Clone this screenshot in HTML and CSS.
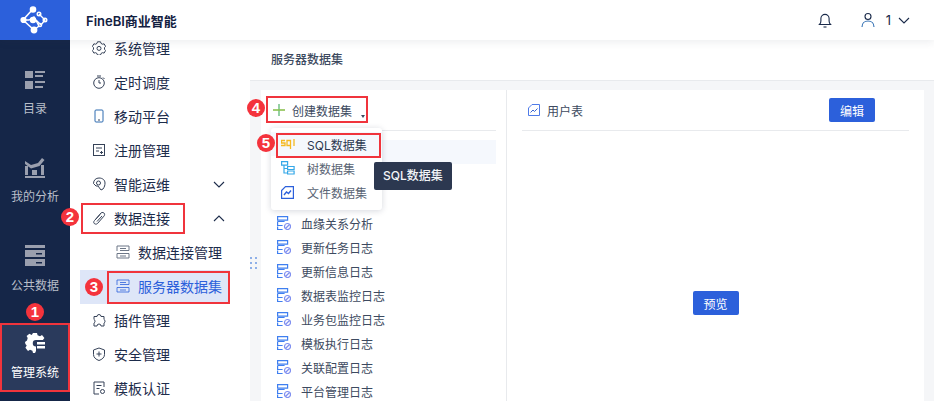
FILE: index.html
```html
<!DOCTYPE html>
<html lang="zh-CN">
<head>
<meta charset="utf-8">
<title>FineBI</title>
<link rel="stylesheet" href="styles.css">
</head>
<body>
<div class="app">
  <header class="topbar">
    <div class="logo">
      <svg width="30" height="30" viewBox="0 0 30 30" fill="none" stroke="#fff" stroke-width="1.4">
        <path d="M13 4 L3 15 L14 25" stroke-width="1.6"/>
        <path d="M3 15 L9 15 L14 12 L19 21 L14 25"/>
        <path d="M19 9 L25 15 L21 20 L16 15"/>
        <circle cx="13" cy="4.5" r="2.6" fill="#fff"/>
        <circle cx="3.5" cy="15" r="2.4" fill="#fff"/>
        <circle cx="14" cy="25" r="2.7" fill="#fff"/>
        <circle cx="13" cy="15" r="2.5" fill="#fff"/>
        <circle cx="19" cy="9" r="1.8"/>
        <circle cx="25" cy="15" r="1.8"/>
        <circle cx="20" cy="20" r="1.6"/>
      </svg>
    </div>
    <div class="brand">FineBI商业智能</div>
    <div class="top-actions">
      <svg class="bell" width="16" height="16" viewBox="0 0 16 16" fill="none" stroke="#1a2a4a" stroke-width="1.1">
        <path d="M2.5 12.5h11c-1-1-1.4-2-1.4-3.5V6.5a4.1 4.1 0 0 0-8.2 0V9c0 1.5-.4 2.5-1.4 3.5z"/>
        <path d="M6.5 15h3"/>
      </svg>
      <svg class="user" width="14" height="16" viewBox="0 0 14 16" fill="none" stroke="#1a2a4a" stroke-width="1.1">
        <circle cx="7" cy="4.5" r="3"/>
        <path d="M1 15c0-3.500 2.500-6 6-6s6 2.500 6 6" stroke="#2c6bb0"/>
      </svg>
      <span class="user-num">1</span>
      <svg width="12" height="7" viewBox="0 0 12 7" fill="none" stroke="#1a2a4a" stroke-width="1.1"><path d="M1 1l5 5 5-5"/></svg>
    </div>
  </header>

  <div class="body">
    <nav class="rail">
      <a class="rail-item">
        <svg width="20" height="18" viewBox="0 0 20 18" fill="#9a9fae"><rect width="8" height="7"/><rect x="10" width="10" height="2"/><rect x="10" y="4" width="8" height="2"/><rect y="10" width="8" height="8"/><rect x="10" y="10" width="10" height="2"/><rect x="10" y="15" width="8" height="2"/></svg>
        <span>目录</span>
      </a>
      <a class="rail-item rail-tight">
        <svg width="20" height="20" viewBox="0 0 20 20" fill="#9a9fae"><path d="M0 3l6 4 7-2 4-5 2.500 2L14.500 8 6 10.500 0 6z"/><rect y="8" width="3" height="9"/><rect x="7" y="12" width="5" height="5"/><rect x="16" y="7" width="3" height="10"/><rect y="18" width="20" height="2"/></svg>
        <span>我的分析</span>
      </a>
      <a class="rail-item">
        <svg width="20" height="21" viewBox="0 0 20 21" fill="#9a9fae"><rect width="20" height="3"/><rect y="5" width="20" height="7"/><rect y="14" width="20" height="7"/><rect x="11" y="8" width="6" height="1.5" fill="#152648"/><rect x="11" y="17" width="6" height="1.5" fill="#152648"/></svg>
        <span>公共数据</span>
      </a>
      <a class="rail-item rail-active">
        <svg width="20" height="20" viewBox="0 0 20 20"><path d="M8 0h4l.6 2.300 2.400 1 2-1.200 2.400 3-1.500 1.900H11a3 3 0 1 0 0 6.500V18l-1 2H8l-.6-2.300-2.400-1-2 1.200-2.600-3.200L1.700 12.500.4 11 0 9l2-1.500.7-2.500L1.600 3l2.800-2.200L6.700 2z" fill="#fff"/><rect x="12" y="9" width="8" height="2.500" fill="#fff"/><rect x="12" y="13" width="8" height="2.500" fill="#fff"/></svg>
        <span>管理系统</span>
      </a>
    </nav>

    <aside class="side">
      <ul class="side-list">
        <li class="side-item">
          <svg class="ic" viewBox="0 0 14 14"><path d="M5.500.8h3l.5 1.600 1.500.8 1.600-.4 1.500 2.600-1.100 1.200v1.700l1.100 1.200-1.500 2.600-1.600-.4-1.500.8-.5 1.600h-3l-.5-1.600-1.500-.8-1.600.4L.4 9.500l1.100-1.200V6.600L.4 5.400l1.500-2.600 1.600.4L5 2.400z"/><circle cx="7" cy="7.400" r="2"/></svg>系统管理</li>
        <li class="side-item">
          <svg class="ic" viewBox="0 0 14 14"><circle cx="7" cy="8" r="5.300"/><path d="M5 1h4M7 5v3h2M11 2.500l1.500 1.500"/></svg>定时调度</li>
        <li class="side-item">
          <svg class="ic" viewBox="0 0 14 14"><rect x="3" y="1" width="8" height="12" rx="1" stroke="#2c6bb0"/><path d="M6 11h2"/></svg>移动平台</li>
        <li class="side-item">
          <svg class="ic" viewBox="0 0 14 14"><rect x="1.500" y="1.500" width="11" height="11"/><path d="M4 5h6M4 8h3M8 9.500h3M9.500 8v3"/></svg>注册管理</li>
        <li class="side-item has-arrow">
          <svg class="ic" viewBox="0 0 14 14"><path d="M7 1c3.500 0 6 2 6 5 0 2-.5 4-2 6l-2 1-3-4H4L1.500 6.500C1.500 3 4 1 7 1z"/><circle cx="6.500" cy="6" r="2"/></svg>智能运维
          <svg class="arrow" width="12" height="7" viewBox="0 0 12 7"><path d="M1 1l5 5 5-5"/></svg></li>
        <li class="side-item has-arrow">
          <svg class="ic" viewBox="0 0 14 14"><path d="M3.500 8.500L9 2c1-1 3-.6 3.500.8.300.9 0 1.700-.6 2.400L5.500 12.500c-1 1-3 .8-3.600-.5-.4-.9 0-1.800.6-2.500L8 3.500M5 10.500L10 5"/></svg>数据连接
          <svg class="arrow" width="12" height="7" viewBox="0 0 12 7"><path d="M1 6l5-5 5 5"/></svg></li>
        <li class="side-item sub">
          <svg class="ic" viewBox="0 0 14 14"><path d="M1 1h12v4.500H4M1 1v5M1 8.500h12V13H1zM4 3.500h6M4 11h6" stroke="#6d7787"/></svg>数据连接管理</li>
        <li class="side-item sub current">
          <svg class="ic ic-thin" viewBox="0 0 14 14"><path d="M1 1h12v4.500H4M1 1v5M1 8.500h12V13H1zM4 3.500h6M4 11h6"/></svg>服务器数据集</li>
        <li class="side-item">
          <svg class="ic" viewBox="0 0 14 14"><path d="M5 3.500a2 2 0 0 1 4 0h3v3a2 2 0 0 1 0 3.500v3H9a2 2 0 0 0-4 0H2v-3a2 2 0 0 0 0-3.500v-3z"/></svg>插件管理</li>
        <li class="side-item">
          <svg class="ic" viewBox="0 0 14 14"><path d="M7 1l5.500 2v4.500c0 3-2.500 5-5.500 6-3-1-5.500-3-5.500-6V3zM4.500 7h5M7 4.500v5"/></svg>安全管理</li>
        <li class="side-item">
          <svg class="ic" viewBox="0 0 14 14"><path d="M12 6V1H2v12h5M4.500 4.500h5M4.500 7.500h3"/><circle cx="10.500" cy="10.500" r="2"/></svg>模板认证</li>
      </ul>
    </aside>

    <main class="main">
      <div class="title-bar">服务器数据集</div>
      <div class="workspace">
        <div class="splitter"><i></i><i></i><i></i><i></i><i></i><i></i></div>
        <section class="tree-panel">
          <div class="tree-head">
            <svg width="12" height="12" viewBox="0 0 12 12"><rect x="5.200" width="1.600" height="12" fill="#7cc68d"/><rect y="5.200" width="12" height="1.600" fill="#8cc152"/></svg>
            <span>创建数据集</span>
            <i class="caret"></i>
          </div>
          <ul class="tree">
            <li class="tree-row selected"></li>
            <li class="tree-row"></li>
            <li class="tree-row"></li>
            <li class="tree-row"><svg class="lg" viewBox="0 0 14 14"><use href="#lg"/></svg>血缘关系分析</li>
            <li class="tree-row"><svg class="lg" viewBox="0 0 14 14"><use href="#lg"/></svg>更新任务日志</li>
            <li class="tree-row"><svg class="lg" viewBox="0 0 14 14"><use href="#lg"/></svg>更新信息日志</li>
            <li class="tree-row"><svg class="lg" viewBox="0 0 14 14"><use href="#lg"/></svg>数据表监控日志</li>
            <li class="tree-row"><svg class="lg" viewBox="0 0 14 14"><use href="#lg"/></svg>业务包监控日志</li>
            <li class="tree-row"><svg class="lg" viewBox="0 0 14 14"><use href="#lg"/></svg>模板执行日志</li>
            <li class="tree-row"><svg class="lg" viewBox="0 0 14 14"><use href="#lg"/></svg>关联配置日志</li>
            <li class="tree-row"><svg class="lg" viewBox="0 0 14 14"><use href="#lg"/></svg>平台管理日志</li>
          </ul>
        </section>
        <section class="detail-panel">
          <div class="detail-head">
            <svg width="12" height="12" viewBox="0 0 12 12" fill="none" stroke="#4f7be8"><path d="M.5 4L4 .5h7.500v11H.5z"/><path d="M2.500 8.500l2.500-2.500 1.500 1.500 3-3" stroke="#3a66d0"/></svg>
            <span class="detail-name">用户表</span>
            <button class="btn edit">编辑</button>
          </div>
          <div class="detail-body"><button class="btn">预览</button></div>
        </section>
      </div>
    </main>
  </div>

  <svg class="defs" width="0" height="0">
    <symbol id="lg" viewBox="0 0 14 14">
      <g fill="none" stroke="#3f7ff0" stroke-width="1.200">
        <path d="M.6.600h10v3.500H.6zM.6 5.500h7M.6 5.500v4h5M.6 10.500v3h5"/>
        <circle cx="10.500" cy="10.500" r="3" stroke="#7f8ff0"/>
        <path d="M8.500 12.500l4-4" stroke="#7f8ff0"/>
      </g>
    </symbol>
  </svg>

  <div class="menu">
    <div class="menu-item">
      <svg width="15" height="10" viewBox="0 0 15 10" fill="none" stroke="#f5b921" stroke-width="1.300"><path d="M4 1.500H.5v2.500h3.500v2.500H0M9.500 1.500H6v5h3.500zM9.500 1.500V10M13 0v7"/></svg>
      <span class="dark">SQL数据集</span>
    </div>
    <div class="menu-item">
      <svg width="14" height="14" viewBox="0 0 14 14" fill="none" stroke="#35a8e8" stroke-width="1.200"><path d="M.6.600h6v3.500h-6zM3 4v8h3M3 7.500h3M6.600 5.500h6.500v3H6.600zM6.600 10h6.500v3H6.600z"/></svg>
      <span>树数据集</span>
    </div>
    <div class="menu-item">
      <svg width="13" height="13" viewBox="0 0 13 13" fill="none" stroke="#2c60db" stroke-width="1.200"><path d="M.6 4.500L4.500.6h7.900v11.800H.6z"/><path d="M3 9l2.500-3 2 1.500L10 4.500" stroke-width="1.400"/></svg>
      <span>文件数据集</span>
    </div>
  </div>
  <div class="tooltip">SQL数据集</div>

  <div class="mark m1"></div>
  <div class="mark m2"></div>
  <div class="mark m3"></div>
  <div class="mark m4"></div>
  <div class="mark m5"></div>
  <div class="num n1">1</div>
  <div class="num n2">2</div>
  <div class="num n3">3</div>
  <div class="num n4">4</div>
  <div class="num n5">5</div>
</div>
</body>
</html>
```
FILE: styles.css
```css
* { box-sizing: border-box; }
html, body { margin: 0; padding: 0; height: 100%; }
body {
  font-family: "Inter", "Noto Sans CJK SC", "Noto Sans", sans-serif;
  font-size: 12px;
  color: #3d4a60;
  overflow: hidden;
}
ul { list-style: none; margin: 0; padding: 0; }
.app { position: relative; width: 934px; height: 401px; display: flex; flex-direction: column; overflow: hidden; }

.topbar {
  position: relative; z-index: 3;
  flex: 0 0 40px; display: flex; align-items: center;
  background: #fff; box-shadow: 0 2px 8px rgba(40, 50, 80, .09);
}
.logo { width: 70px; height: 40px; background: #2c60db; display: flex; align-items: center; justify-content: center; }
.brand { margin-left: 16px; font-size: 13px; font-weight: 600; color: #12203f; }
.top-actions { margin-left: auto; display: flex; align-items: center; padding-right: 24px; }
.bell { margin-right: 28px; }
.user-num { margin: 0 7px 0 11px; font-size: 13px; color: #1a2a4a; }

.body { flex: 1; display: flex; min-height: 0; }

.rail { flex: 0 0 70px; background: #152648; display: flex; flex-direction: column; padding-top: 31px; overflow: hidden; }
.rail-item { flex: none; height: 87px; display: flex; flex-direction: column; align-items: center; gap: 11px; color: #b9bec9; font-size: 12px; line-height: 18px; }
.rail-tight { gap: 10px; }
.rail-item svg { display: block; }
.rail-item:nth-child(3) { height: 78px; }
.rail-active { height: 69px; padding-top: 10px; background: #2a3a5c; color: #fff; }

.side { flex: 0 0 180px; background: #fff; overflow: hidden; }
.side-list { margin-top: -8px; }
.side-item { height: 34px; display: flex; align-items: center; padding: 0 0 2px 22px; font-size: 14px; color: #1d2c4b; }
.ic { width: 14px; height: 14px; margin-right: 8px; fill: none; stroke: #364258; stroke-width: 1; }
.arrow { margin-left: auto; margin-right: 25px; fill: none; stroke: #1d2c4b; stroke-width: 1.100; }
.sub { padding-left: 36px; margin-left: 10px; }
.current { background: #dee6f8; color: #2c60db; width: 150px; }
.current .ic { stroke: #2c60db; }
.current .ic-thin { stroke-width: .8; }

.main { flex: 1; display: flex; flex-direction: column; min-width: 0; }
.title-bar { flex: 0 0 41px; background: #fff; border-bottom: 1px solid #e8eaed; padding: 13px 0 0 21px; font-size: 12px; line-height: 14px; font-weight: 500; color: #3d4a60; }
.workspace { flex: 1; display: flex; background: #f5f6f8; padding: 9px 10px 0 11px; position: relative; min-height: 0; }
.splitter { position: absolute; left: 0; top: 176px; width: 7px; display: grid; grid-template-columns: 2px 2px; gap: 3px 3px; }
.splitter i { width: 2px; height: 2px; background: #8fb0e8; }

.tree-panel { flex: 0 0 246px; background: #fff; border-right: 1px solid #e8eaed; padding: 0 10px; display: flex; flex-direction: column; }
.tree-head { flex: 0 0 41px; display: flex; align-items: center; padding-left: 2px; gap: 7px; border-bottom: 1px solid #e8eaed; color: #3d4a60; position: relative; }
.caret { position: absolute; left: 90px; top: 25px; width: 0; height: 0; border: 2px solid transparent; border-top: 3px solid #3d4a60; }
.tree { margin-top: 9px; }
.tree-row { height: 24px; display: flex; align-items: center; padding: 0 0 2px 6px; gap: 10px; color: #3d4a60; }
.selected { background: #f5f8fd; }
.lg { width: 14px; height: 14px; }

.detail-panel { flex: 1; background: #fff; display: flex; flex-direction: column; padding: 0 15px; min-width: 0; }
.detail-head { flex: 0 0 41px; display: flex; align-items: center; gap: 7px; border-bottom: 1px solid #e8eaed; padding-left: 6px; }
.detail-name { color: #3d4a60; }
.btn { width: 46px; height: 24px; border: 0; border-radius: 2px; background: #2c60db; color: #fff; font: inherit; font-size: 12px; padding: 0; }
.edit { margin-left: auto; margin-right: 34px; }
.detail-body { flex: 1; display: flex; justify-content: center; align-items: flex-start; padding-top: 160px; }
.defs { position: absolute; }

.menu { position: absolute; z-index: 5; left: 271px; top: 128px; width: 111px; height: 82px; padding-top: 4px; background: #fff; border-radius: 3px; box-shadow: 0 1px 6px rgba(30, 40, 70, .18); }
.menu-item { position: relative; height: 24px; display: flex; align-items: center; color: #5a6474; }
.menu-item svg { position: absolute; left: 10px; }
.menu-item span { margin-left: 36px; }
.menu-item .dark { color: #2c3850; }
.menu-item:first-child { background: #f5f8fd; }
.tooltip { position: absolute; z-index: 5; left: 374px; top: 162px; width: 78px; height: 28px; background: #2c3850; border-radius: 2px; color: #f2f4f7; font-size: 12px; font-weight: 500; line-height: 28px; text-align: center; }

.mark { position: absolute; z-index: 6; border: 2px solid #f0343c; pointer-events: none; }
.m1 { left: 0; top: 323px; width: 70px; height: 69px; }
.m2 { left: 81px; top: 203px; width: 104px; height: 31px; }
.m3 { left: 107px; top: 271px; width: 123px; height: 33px; }
.m4 { left: 266px; top: 96px; width: 102px; height: 27px; }
.m5 { left: 276px; top: 133px; width: 105px; height: 25px; }

.num { position: absolute; z-index: 7; width: 18px; height: 18px; border-radius: 50%; background: #f4333c; color: #fff; font-family: "Liberation Sans", sans-serif; font-size: 15px; font-weight: 700; line-height: 18px; text-align: center; }
.n1 { left: 26px; top: 303px; }
.n2 { left: 61px; top: 208px; }
.n3 { left: 85px; top: 278px; }
.n4 { left: 247px; top: 99px; }
.n5 { left: 257px; top: 134px; }
```
